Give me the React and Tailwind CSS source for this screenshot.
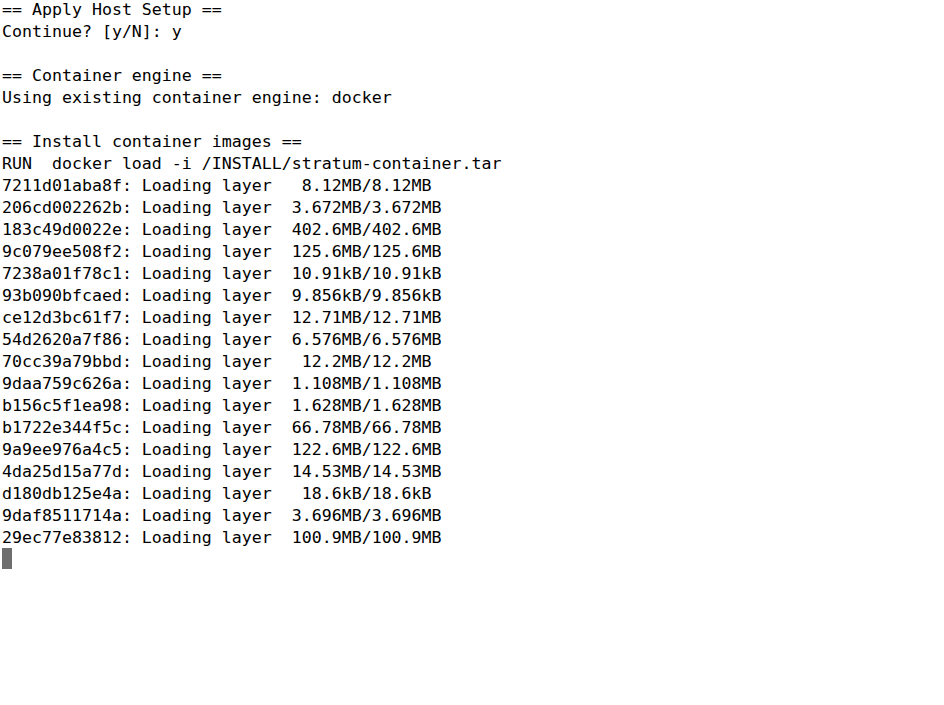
export default function App() {
  const lines = [
    "== Apply Host Setup ==",
    "Continue? [y/N]: y",
    "",
    "== Container engine ==",
    "Using existing container engine: docker",
    "",
    "== Install container images ==",
    "RUN  docker load -i /INSTALL/stratum-container.tar",
    "7211d01aba8f: Loading layer   8.12MB/8.12MB",
    "206cd002262b: Loading layer  3.672MB/3.672MB",
    "183c49d0022e: Loading layer  402.6MB/402.6MB",
    "9c079ee508f2: Loading layer  125.6MB/125.6MB",
    "7238a01f78c1: Loading layer  10.91kB/10.91kB",
    "93b090bfcaed: Loading layer  9.856kB/9.856kB",
    "ce12d3bc61f7: Loading layer  12.71MB/12.71MB",
    "54d2620a7f86: Loading layer  6.576MB/6.576MB",
    "70cc39a79bbd: Loading layer   12.2MB/12.2MB",
    "9daa759c626a: Loading layer  1.108MB/1.108MB",
    "b156c5f1ea98: Loading layer  1.628MB/1.628MB",
    "b1722e344f5c: Loading layer  66.78MB/66.78MB",
    "9a9ee976a4c5: Loading layer  122.6MB/122.6MB",
    "4da25d15a77d: Loading layer  14.53MB/14.53MB",
    "d180db125e4a: Loading layer   18.6kB/18.6kB",
    "9daf8511714a: Loading layer  3.696MB/3.696MB",
    "29ec77e83812: Loading layer  100.9MB/100.9MB",
  ];
  return (
    <div className="w-[944px] h-[705px] bg-white overflow-hidden">
      <div
        className="pl-[2px] -mt-[2px] text-black text-[16.6px] whitespace-pre"
        style={{ fontFamily: '"DejaVu Sans Mono", "Liberation Mono", monospace' }}
      >
        {lines.map((l, i) => (
          <div key={i} className="h-[22px] pt-[1px] leading-[22px]">{l}</div>
        ))}
        <div className="h-[22px] flex items-start">
          <div className="w-[10px] h-[21px] bg-[#6e6e6e]" />
        </div>
      </div>
    </div>
  );
}
